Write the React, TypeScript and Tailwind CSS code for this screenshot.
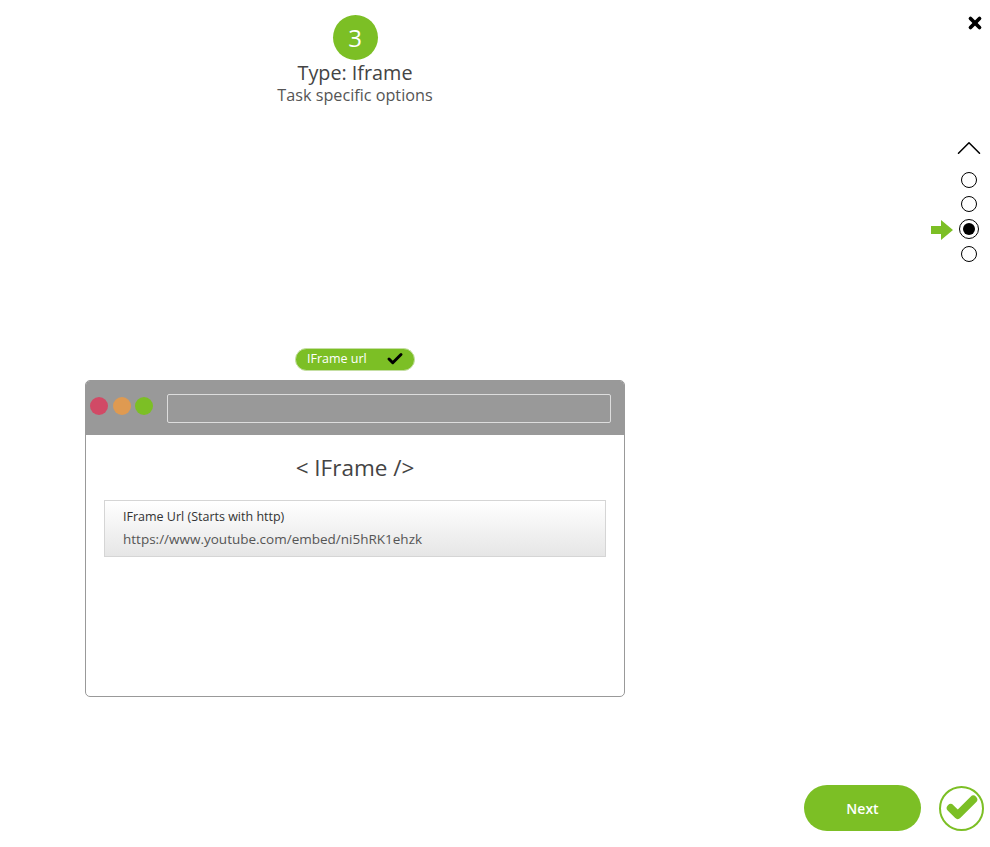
import { Check, ChevronUp, X } from 'lucide-react';

function Radio({ active }: { active?: boolean }) {
  if (active) {
    return (
      <div className="w-[20px] h-[20px] rounded-full border-[1.5px] border-black flex items-center justify-center">
        <div className="w-[12px] h-[12px] rounded-full bg-black"></div>
      </div>
    );
  }
  return <div className="w-[16px] h-[16px] rounded-full border border-black"></div>;
}

export default function App() {
  return (
    <div className="h-[847px] bg-white flex font-['Open_Sans',sans-serif] overflow-hidden">
      {/* Step content */}
      <div className="w-[710px] flex flex-col items-center pt-[15px]">
        <div className="w-[45px] h-[45px] rounded-full bg-[#7cbf25] text-white text-[24px] leading-[45px] text-center">3</div>
        <h1 className="text-[19.8px] leading-[26px] text-[#444]">Type: Iframe</h1>
        <p className="text-[16.2px] leading-[20px] text-[#555] -mt-[1px]">Task specific options</p>

        <div className="mt-[243px] w-[120px] h-[23px] rounded-full bg-[#7cbf25] border border-[#c5dfa3] flex items-center text-white text-[12.5px] font-medium pl-[11px]">
          <span>IFrame url</span>
          <Check className="w-[18px] h-[18px] mb-[2px] text-black ml-[19px]" strokeWidth={4} />
        </div>

        {/* Browser frame */}
        <div className="mt-[9px] w-[540px] h-[317px] rounded-[5px] border border-[#999] overflow-hidden">
          <div className="h-[54px] bg-[#999] flex items-center pl-[4px] pr-[13px]">
            <div className="w-[18px] h-[18px] mb-[5px] rounded-full bg-[#d14a66]"></div>
            <div className="w-[18px] h-[18px] mb-[5px] rounded-full bg-[#df9a51] ml-[5px]"></div>
            <div className="w-[18px] h-[18px] mb-[5px] rounded-full bg-[#7cbf25] ml-[4px]"></div>
            <div className="flex-1 h-[29px] ml-[14px] rounded-[2px] border border-[#ddd]"></div>
          </div>
          <div className="px-[18px]">
            <h2 className="text-[22.5px] leading-[30px] text-[#444] text-center mt-[18px]">&lt; IFrame /&gt;</h2>
            <div className="mt-[17px] h-[57px] border border-[#d5d5d5] bg-gradient-to-b from-white to-[#e6e6e6] pl-[18px] pt-[7px]">
              <div className="text-[12.5px] leading-[18px] text-[#333]">IFrame Url (Starts with http)</div>
              <div className="text-[13.5px] leading-[20px] text-[#555] mt-[3px]">https://www.youtube.com/embed/ni5hRK1ehzk</div>
            </div>
          </div>
        </div>
      </div>

      {/* Right rail */}
      <div className="flex-1 flex flex-col items-end pb-[16px]">
        <X className="w-[18px] h-[18px] text-black mt-[14px] mr-[6px]" strokeWidth={5} />

        <ChevronUp className="w-[42px] h-[42px] text-black mt-[95px]" strokeWidth={0.9} />
        <div className="flex flex-col items-center w-[20px] mr-[11px] mt-[3px]">
          <Radio />
          <div className="mt-[8px]"><Radio /></div>
          <div className="mt-[7px] relative">
            <Radio active />
            {/* Arrow marking the current step */}
            <svg className="absolute left-[-28px] top-[1px] w-[22px] h-[20px]" viewBox="0 0 22 20">
              <path d="M0 6h10V0l12 10-12 10v-6H0z" fill="#7cbf25" />
            </svg>
          </div>
          <div className="mt-[7px]"><Radio /></div>
        </div>

        <div className="mt-auto flex items-center mr-[6px]">
          <button className="w-[117px] h-[46px] rounded-full bg-[#7cbf25] text-white text-[14px] font-semibold">Next</button>
          <div className="w-[45px] h-[45px] ml-[18px] rounded-full border-[2px] border-[#7cbf25] flex items-center justify-center">
            <Check className="w-[34px] h-[34px] text-[#7cbf25]" strokeWidth={5.5} />
          </div>
        </div>
      </div>
    </div>
  );
}
